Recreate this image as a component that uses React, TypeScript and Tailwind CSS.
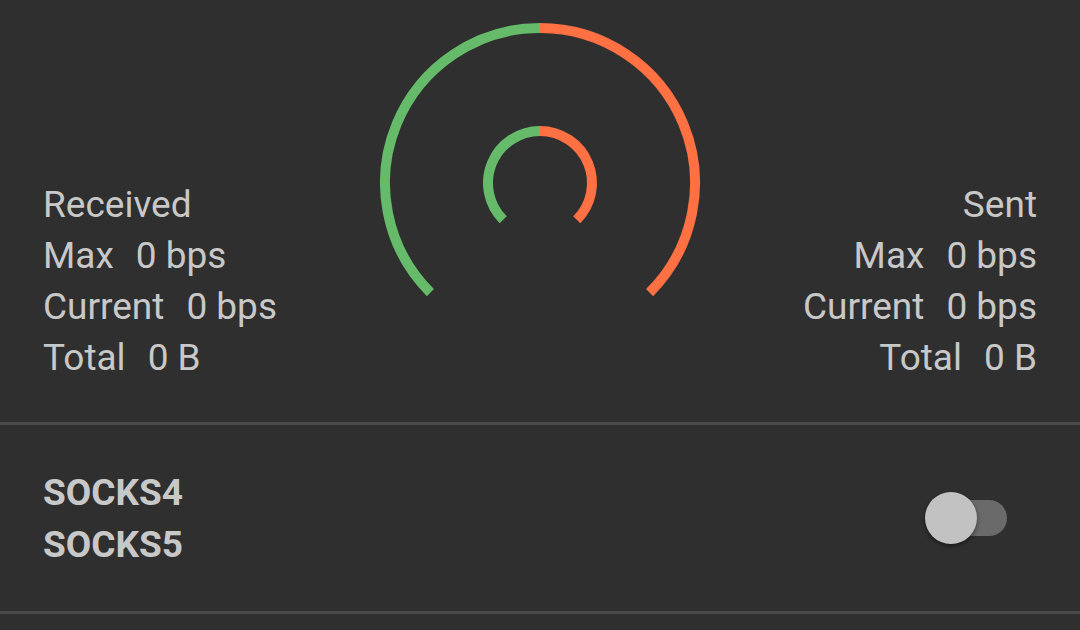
import React from "react";

const GREEN = "#66bb6a";
const ORANGE = "#ff7043";

function arcPoints(r: number) {
  const c = 165;
  const d = r * Math.SQRT1_2;
  return {
    left: `${c - d} ${c + d}`,
    top: `${c} ${c - r}`,
    right: `${c + d} ${c + d}`,
  };
}

function Gauge() {
  const outer = arcPoints(155);
  const inner = arcPoints(52);
  return (
    <svg width="330" height="300" viewBox="0 0 330 300" className="self-start mt-[18px] shrink-0">
      <g fill="none" strokeWidth="10" strokeLinecap="butt">
        <path d={`M ${outer.left} A 155 155 0 0 1 ${outer.top}`} stroke={GREEN} />
        <path d={`M ${outer.top} A 155 155 0 0 1 ${outer.right}`} stroke={ORANGE} />
        <path d={`M ${inner.left} A 52 52 0 0 1 ${inner.top}`} stroke={GREEN} />
        <path d={`M ${inner.top} A 52 52 0 0 1 ${inner.right}`} stroke={ORANGE} />
      </g>
    </svg>
  );
}

function Stat({ label, value }: { label: string; value: string }) {
  return (
    <div className="flex gap-[22px]">
      <span>{label}</span>
      <span>{value}</span>
    </div>
  );
}

function TrafficColumn({ title, align }: { title: string; align: "left" | "right" }) {
  return (
    <div
      className={
        align === "left"
          ? "flex flex-col items-start w-[234px]"
          : "flex flex-col items-end w-[234px]"
      }
    >
      <div>{title}</div>
      <Stat label="Max" value="0 bps" />
      <Stat label="Current" value="0 bps" />
      <Stat label="Total" value="0 B" />
    </div>
  );
}

function Toggle() {
  return (
    <div className="relative w-[82px] h-[52px] flex items-center">
      <div className="absolute right-0 w-[78px] h-[36px] rounded-full bg-[#6a6a6a]" />
      <div className="absolute left-0 w-[52px] h-[52px] rounded-full bg-[#c2c2c2] shadow-[0_2px_4px_rgba(0,0,0,0.45)]" />
    </div>
  );
}

export default function App() {
  return (
    <div className="w-[1080px] h-[630px] bg-[#2f2f2f] text-[#c8c8c8] font-['Roboto',sans-serif] overflow-hidden">
      <section className="h-[425px] flex items-end justify-between px-[43px] pb-[39px] border-b-[3px] border-[#494949] text-[37px] leading-[51px]">
        <TrafficColumn title="Received" align="left" />
        <Gauge />
        <TrafficColumn title="Sent" align="right" />
      </section>

      <section className="h-[189px] flex items-center justify-between pl-[43px] pr-[73px] border-b-[3px] border-[#494949]">
        <div className="font-bold text-[37px] leading-[52px] mt-[2px]">
          <div>SOCKS4</div>
          <div>SOCKS5</div>
        </div>
        <Toggle />
      </section>
    </div>
  );
}
